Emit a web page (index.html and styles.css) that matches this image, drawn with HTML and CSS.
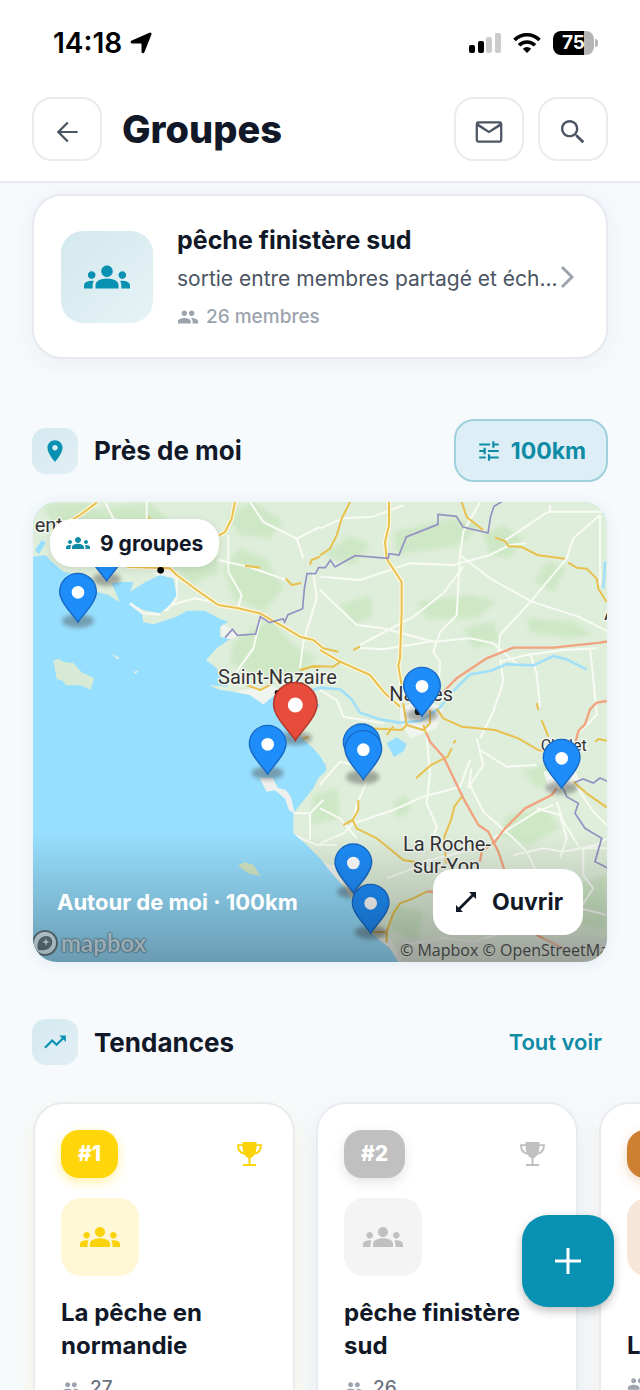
FILE: index.html
```
<!DOCTYPE html>
<html lang="fr">
  <head>
    <meta charset="UTF-8" />
    <meta name="viewport" content="width=device-width, initial-scale=1.0" />
    <title>Groupes</title>
    <link rel="stylesheet" href="styles.css" />
  </head>
  <body>
    <!-- Shared icons -->
    <svg class="sprite" aria-hidden="true">
      <symbol id="i-groups" viewBox="0 0 24 24">
        <path d="M12 12.75c1.63 0 3.07.39 4.24.9 1.08.48 1.76 1.56 1.76 2.73V18H6v-1.61c0-1.18.68-2.26 1.76-2.73 1.17-.52 2.61-.91 4.24-.91zM4 13c1.1 0 2-.9 2-2s-.9-2-2-2-2 .9-2 2 .9 2 2 2zm1.13 1.1c-.37-.06-.74-.1-1.13-.1-.99 0-1.93.21-2.78.58C.48 14.9 0 15.62 0 16.43V18h4.5v-1.61c0-.83.23-1.61.63-2.29zM20 13c1.1 0 2-.9 2-2s-.9-2-2-2-2 .9-2 2 .9 2 2 2zm4 3.43c0-.81-.48-1.53-1.22-1.85-.85-.37-1.79-.58-2.78-.58-.39 0-.76.04-1.13.1.4.68.63 1.46.63 2.29V18H24v-1.57zM12 6c1.66 0 3 1.34 3 3s-1.34 3-3 3-3-1.34-3-3 1.34-3 3-3z" />
      </symbol>
      <symbol id="i-people" viewBox="0 0 24 24">
        <path d="M16 11c1.66 0 2.99-1.34 2.99-3S17.66 5 16 5c-1.66 0-3 1.34-3 3s1.34 3 3 3zm-8 0c1.66 0 2.99-1.34 2.99-3S9.66 5 8 5C6.34 5 5 6.34 5 8s1.34 3 3 3zm0 2c-2.33 0-7 1.17-7 3.5V19h14v-2.5c0-2.33-4.67-3.5-7-3.5zm8 0c-.29 0-.62.02-.97.05 1.16.84 1.97 1.97 1.97 3.45V19h6v-2.5c0-2.33-4.67-3.5-7-3.5z" />
      </symbol>
      <symbol id="i-trophy" viewBox="0 0 24 24">
        <path d="M5.3 0h13.400v4c0 6-2 10-5.700 11.300V21h5.300v2H5.700v-2H11v-5.700C7.300 14 5.300 10 5.300 4z" />
        <path d="M6 3H1c0 4.800 2.200 7.500 6.500 8.200M18 3h5c0 4.800-2.200 7.500-6.500 8.200" fill="none" stroke="currentColor" stroke-width="1.900" />
      </symbol>
      <symbol id="pin" viewBox="-60 -150 120 180" overflow="visible">
        <path d="M0 0C-9 -18 -55 -58 -55 -92A55 55 0 0 1 55 -92C55 -58 9 -18 0 0Z" stroke-width="4" />
        <circle cy="-90" r="19" fill="#fff" stroke="none" />
      </symbol>
    </svg>

    <div class="app">
      <div class="status-bar">
        <div class="status-time">
          <span>14:18</span>
          <svg width="22" height="22" viewBox="0 0 22 22">
            <path d="M20 .6a1.300 1.300 0 0 1 1.500 1.700L14.500 20c-.8 1.900-3 1.500-3-.5V12.200c0-.5-.2-.7-.7-.7H2.500C.4 11.500 0 9.300 1.900 8.500z" />
          </svg>
        </div>
        <div class="status-icons">
          <svg width="32" height="22" viewBox="0 0 32 22">
            <rect y="13" width="6" height="8" rx="2" />
            <rect x="9" y="9" width="6" height="12" rx="2" />
            <rect x="17" y="5" width="6" height="16" rx="2" fill="#ccc" />
            <rect x="26" y="1" width="6" height="20" rx="2" fill="#ccc" />
          </svg>
          <svg width="28" height="22" viewBox="0 0 28 22" fill="none" stroke="#000" stroke-width="3.600">
            <path d="M1.500 8a17.500 17.500 0 0 1 25 0" fill="none" />
            <path d="M6 13.300a11.300 11.300 0 0 1 16 0" fill="none" />
            <path d="M14 21l-4.200-4.200a6 6 0 0 1 8.400 0z" fill="#000" stroke="none" />
          </svg>
          <div class="battery"><span>75</span></div>
        </div>
      </div>

      <header class="top-bar">
        <button class="icon-button" type="button" aria-label="Retour">
          <svg width="32" height="32" viewBox="0 0 24 24">
            <path d="M20 11.200H7.500l5.700-5.700L12 4.300l-7.700 7.700 7.700 7.700 1.200-1.200-5.700-5.700H20z" />
          </svg>
        </button>
        <h1>Groupes</h1>
        <button class="icon-button" type="button" aria-label="Messages">
          <svg width="32" height="32" viewBox="0 0 24 24">
            <path d="M20 4H4c-1.100 0-1.990.9-1.990 2L2 18c0 1.100.9 2 2 2h16c1.100 0 2-.9 2-2V6c0-1.100-.9-2-2-2zm.3 14.300H3.700V7.800L12 13l8.300-5.200zM12 11L4 5.700h16z" />
          </svg>
        </button>
        <button class="icon-button" type="button" aria-label="Rechercher">
          <svg width="32" height="32" viewBox="0 0 24 24">
            <path d="M15.500 14h-.79l-.28-.27C15.410 12.590 16 11.110 16 9.500 16 5.910 13.090 3 9.500 3S3 5.910 3 9.500 5.910 16 9.500 16c1.610 0 3.090-.59 4.230-1.570l.27.28v.79l5 4.990L20.490 19l-4.990-5zm-6 .2C6.900 14.200 4.800 12.100 4.800 9.500S6.900 4.800 9.500 4.800s4.700 2.100 4.700 4.700-2.100 4.700-4.700 4.700z" />
          </svg>
        </button>
      </header>

      <main class="content">
        <a class="group-card" href="#">
          <span class="group-icon">
            <svg width="46" height="46"><use href="#i-groups" /></svg>
          </span>
          <span class="group-text">
            <span class="group-name">pêche finistère sud</span>
            <span class="group-desc">sortie entre membres partagé et éch...</span>
            <span class="members">
              <svg width="22" height="22"><use href="#i-people" /></svg>
              26 membres
            </span>
          </span>
          <svg class="chevron" width="14" height="24" viewBox="0 0 14 24">
            <path d="M2 2l10 10L2 22" />
          </svg>
        </a>

        <section class="nearby">
          <div class="section-head">
            <span class="section-icon">
              <svg width="26" height="26" viewBox="0 0 24 24">
                <path d="M12 2C8.130 2 5 5.130 5 9c0 5.250 7 13 7 13s7-7.750 7-13c0-3.870-3.130-7-7-7zm0 9.500c-1.380 0-2.500-1.120-2.500-2.500s1.120-2.500 2.500-2.500 2.500 1.120 2.500 2.500-1.120 2.500-2.500 2.500z" />
              </svg>
            </span>
            <h2>Près de moi</h2>
            <button class="radius-button" type="button">
              <svg width="26" height="26" viewBox="0 0 24 24">
                <path d="M3 17v2h6v-2H3zM3 5v2h10V5H3zm10 16v-2h8v-2h-8v-2h-2v6h2zM7 9v2H3v2h4v2h2V9H7zm14 4v-2H11v2h10zm-6-4h2V7h4V5h-4V3h-2v6z" />
              </svg>
              100km
            </button>
          </div>

          <div class="map">
            <svg class="map-canvas" viewBox="39 21 1722 1380" preserveAspectRatio="xMidYMid slice">
              <defs>
                <filter id="soft" x="-20%" y="-20%" width="140%" height="140%">
                  <feGaussianBlur stdDeviation="7" />
                </filter>
                <clipPath id="land-clip">
                  <path d="M39 21V185L75 180 100 205 130 230 180 240 230 290 265 300 300 322 275 265 310 260 340 262 330 290 375 262 420 240 460 250 470 300 450 330 420 355 370 345 330 325 365 352 370 382 400 388 470 365 500 347 555 347 600 372 625 380 600 395 600 425 630 432 590 460 558 495 590 520 602 550 625 575 565 570 600 585 640 590 690 600 730 628 770 595 830 600 880 620 900 630 860 680 840 725 880 760 905 790 920 825 895 850 880 880 840 930 820 955 820 1015 860 1050 900 1090 920 1115 945 1145 975 1180 1020 1260 1060 1320 1110 1360 1135 1401H1761V21Z" />
                </clipPath>
              </defs>
              <rect x="39" y="21" width="1722" height="1380" fill="#97dfff" />

              <!-- Land -->
              <g clip-path="url(#land-clip)">
                <rect x="39" y="21" width="1722" height="1380" fill="#dfeeda" />
                <g fill="#c3e4ba" opacity=".6" filter="url(#soft)">
                  <path d="M70 30l120-9 90 50-60 40-120-10zM230 40l160-15 70 60-110 20zM620 60l80-40 90 60-40 50-90-10zM660 160l80 30 50 90-60 70-90-40-30-90zM470 120l110 30 20 80-90 40-60-60z" />
                  <path d="M640 440l110-70 70 80 70 40-60 50-150 10-50-50zM1120 110l180-40 80 20-60 60-190 30zM960 330l90-30 10 60-60 30zM1190 320l160-20 80 20-60 50-150 0zM1520 370l140 10 60 40-80 10-110-20z" />
                  <path d="M1390 120l60-30 60 40-40 60-60-10zM1540 260l40-60 60 20-40 70zM1330 400l90-20 20 60-80 20zM910 180l80-60 60 30-50 60zM1120 920l40-20 10 50-40 20z" />
                  <path d="M1460 960l120-20 40 60-100 50-80-30zM1650 1180l110-40v160l-80-10zM1330 1230l110 10 40 60-100 20zM1120 1230l90 20-20 90-80-40zM1510 830l80-30 30 50-70 30zM880 900l70-20 10 90-90 20z" />
                </g>
                <g fill="#f0f4ee">
                  <path d="M400 235l50-20 30 30-40 20zM1140 640l70-30 60 30-20 60-80 30-30-50zM1570 830l90-20 20 50-90 30zM600 380l60 40-50 20zM640 590l110-20 40 20-60 40z" />
                  <path d="M910 1105l50 10 10 50-60-20zM1050 1330l60 0 40 71h-60z" />
                </g>

                <!-- Minor roads -->
                <g fill="none" stroke="#f8fbf4" stroke-width="6" stroke-linejoin="round">
                  <path d="M255 21l25 50 40 20M380 21v60M690 21l40 60 100 50 70-35M830 130l20 60M595 195l90 20 115 40M625 120v110l40 70-10 35M470 250l0 60-30 35-90-10M455 330l70-20 70 15" />
                  <path d="M650 530l50-70 20-80M840 520l10-80 40-130-10-80M900 100l70-30 90-5 90-35M900 245l120 10 150-50 130 5 110-30 60-30 50-5" />
                  <path d="M1020 450l160-85 90-70 60-80M900 285l110 105 80 10 150 40 110-10 70 15 80 70M1010 458l80 5 150-25M1380 21l-50 90-10 70-10 180-50 50-20 60 20 30-5 100" />
                  <path d="M1320 180l90 70 125 70 140 45 90 45M1450 140l135-90h160l15-10M1740 60l-80 70-20 60-100 120-100 110-5 60M1740 60v210M1590 30v20M1440 500l80-20 110-15 100-5" />
                  <path d="M1440 490l10 70-30 90-40 80M1530 475l20 60 10 100M1710 460l10 90 10 110-50 50M900 585l50 30 20 50 120 20M1220 725l10 110-10 90 30 70-20 60M900 870l60-70 80 20" />
                  <path d="M1000 985l120-40 90-40 110-30 30-80M1370 730l20 80-40 60 40 80 90 80 40 40 60 120M1380 765l80 50 90-5M1345 880l10-60M900 940l60 30 50 60M900 1045l70-30 30-30" />
                  <path d="M1550 940l70 20 20 70-20 60M1610 920l20 60 50 80 90 0M1420 1030l130-80 50-20M1210 1100l80-20 110-30M1660 860l60 90 40 40M1480 1080l90-20 60 10 100-20 30-20M1500 1170l60-10M1690 1060v80l30 40-40 60 80 20" />
                  <path d="M820 955h50l40-40M870 955l0 80M820 1020l70 30 60 0M1040 860l-30 70-10 50M1100 1150l80-30 100-5M1150 1350l120-20 90 10 100-30" />
                </g>

                <!-- Rivers -->
                <g fill="none" stroke="#a2e0fa" stroke-width="8" stroke-linejoin="round">
                  <path d="M830 600l70-22 60 5 35 30 25 40 60 20 60 10 60-5 60-40 40-50 50-50 60-10 50-20 80 3 60-28 40 10 60 30" />
                  <path d="M1755 200l-5 80" />
                </g>
                <path d="M1100 745l30-18 30 20-8 20-30 20zM900 790l18 20-4 22-14 8zM45 165l20-30 12 8-20 35zM90 180l15-10" fill="#97dfff" />

                <!-- Main roads -->
                <g fill="none" stroke-linejoin="round">
                  <g stroke="#fff7dc" stroke-width="13">
                    <path d="M130 90l50-30 50-37M645 21l-10 50-20 40-18 10M320 215l130 5 20 20 60 45 65 45 60 10 65 15 70 40 50 30 40 10 30 25M900 465l60 35 90 40 45 55 45 40" />
                    <path d="M1107 21l0 70-12 50 5 50 45 70 0 90-5 140-5 20 10 60" />
                  </g>
                  <g stroke="#e8c04e" stroke-width="6">
                    <path d="M130 90l50-30 50-37M645 21l-10 50-20 40-18 10M320 215l130 5 20 20 60 45 65 45 60 10 65 15 70 40 50 30 40 10 30 25 45 10" />
                    <path d="M840 525l40-12 60 2 25-17M900 465l60 35 90 40 45 55 45 40" />
                    <path d="M1107 21l0 70-12 50 5 50 45 70 0 90-5 140-5 20 10 60M990 21l-25 50-15 50-20 40-30 20M870 210l5-15 25-10M388 65v20M675 212l45 6M797 250l18 20 28-6" />
                    <path d="M1325 21l15 45 50 40M1425 128l30 10 10 15 40 3 50 25 80 10M1645 203l25 15 30 3 30 30 5 30 25 40" />
                    <path d="M1000 465l20-10M680 570l40 15 40-20M845 525l30-10 25 2M1150 625l10 65-15 15-100-5M1160 690l50 15 20-20 0-40M1250 640l20 30 55 25 100 10 70 25 60 35 30 5M1210 690l10 30M1100 720l20-25" />
                    <path d="M1550 625l5 20M1565 675l20 50M1188 850l45-40 50-25 12-25M1300 745l8-10M1015 915l0 30-17 30-28 15M998 975l12 25 60 30 80 65 50 8M1325 905l-22 30-10 40-20 50 5 80M1660 860l40 35 60 42" />
                    <path d="M1220 1190l-40 20-40 15-20 30-20 55M1060 1310l40 2 0 30M1725 740l10-8 25 5M865 725l-25 10" />
                  </g>
                </g>
                <g fill="none" stroke="#f0a37e" stroke-width="7" stroke-linejoin="round">
                  <path d="M1260 600l50-50 90-60 80-32 120 0 140-15 60-10 60-30M1220 715l10 25 40 45 60 125 45 80 30 20 30 60 20 60" />
                  <path d="M1760 618l-30 5-20 20-15 45-20 20-10 40M1610 880l-15 20-80 40-60 60-30 40-40 30-5 30M1250 1190l-30 0M1550 1320l80 40" />
                </g>
                <path d="M615 428l22-25 15 18 55-4 14-52 28 18 40-12 5 10 10-22 44-18 5-60 8-45 25 0 10-18 20 0 15-22 14 20 60-34 100 8 2-14 30 4 22-54 95-38 0-30 55 6 20 32 75 18 8-50 10-30 30-18" fill="none" stroke="#9391c2" stroke-width="5" />
                <path d="M1630 880l10 25 35 20-10 30 30 45 50 30-20 70 40 20M1665 862l25-10 30 12 20-15 22 10" fill="none" stroke="#9391c2" stroke-width="5" />
              </g>

              <!-- Islands -->
              <path d="M100 497l15-6 15 10 30 3 25 28 38 18-12 35-28-14-45 0-10-14-18-5z" fill="#d7ead5" />
              <path d="M275 478l25 10-8 5zM340 530l15-3-8 10z" fill="#e3f0e6" />
              <path d="M655 1110l20-8 25 8 22 32-30-4-25-15z" fill="#d3e8c4" />
              <path d="M718 848l40 0 15 30 25 8 15 20 12 50-18-10-12-35-30-25-25 4z" fill="#edf0ec" />
              <path d="M330 325l40 30 50 3" fill="none" stroke="#f4f7f2" stroke-width="8" />

              <!-- Towns -->
              <g class="map-label">
                <text x="44" y="112">ent</text>
                <text x="594" y="566">Saint-Nazaire</text>
                <text x="1108" y="617">Nantes</text>
                <text x="1562" y="767" class="small">Cholet</text>
                <text x="1149" y="1067">La Roche-</text>
                <text x="1178" y="1133">sur-Yon</text>
                <text x="1752" y="374">A</text>
              </g>
              <circle cx="422" cy="226" r="10" />
              <circle cx="773" cy="594" r="9" />
              <circle cx="1194" cy="650" r="10" />

              <!-- Pins -->
              <g fill="#444" opacity=".42" filter="url(#soft)">
                <ellipse cx="260" cy="253" rx="42" ry="20" />
                <ellipse cx="174" cy="378" rx="48" ry="20" />
                <ellipse cx="1206" cy="660" rx="48" ry="20" />
                <ellipse cx="826" cy="730" rx="50" ry="20" />
                <ellipse cx="743" cy="834" rx="48" ry="20" />
                <ellipse cx="1028" cy="846" rx="50" ry="22" />
                <ellipse cx="1625" cy="878" rx="48" ry="20" />
                <ellipse cx="1000" cy="1190" rx="48" ry="20" />
                <ellipse cx="1052" cy="1312" rx="48" ry="20" />
              </g>
              <g class="pins">
                <use href="#pin" x="200" y="108" width="120" height="180" />
                <use href="#pin" x="114" y="232" width="120" height="180" />
                <use href="#pin" x="1146" y="514" width="120" height="180" />
                <use class="me" href="#pin" x="755" y="559" width="142" height="213" />
                <use href="#pin" x="683" y="688" width="120" height="180" />
                <use href="#pin" x="965" y="684" width="120" height="180" />
                <use href="#pin" x="970" y="704" width="120" height="180" />
                <use href="#pin" x="1565" y="730" width="120" height="180" />
                <use href="#pin" x="940" y="1044" width="120" height="180" />
                <use href="#pin" x="992" y="1165" width="120" height="180" />
              </g>
            </svg>

            <div class="map-logo">
              <svg width="26" height="26" viewBox="0 0 26 26">
                <circle cx="13" cy="13" r="12" fill="#fff" stroke="#555" stroke-width="2" />
                <path d="M6 20c-2-8 2-14 9-14a6 6 0 0 1 5 8c-2 6-8 7-14 6z" fill="#555" />
                <path d="M14 8l1 3 3 1-3 1-1 3-1-3-3-1 3-1z" fill="#fff" />
              </svg>
              <span>mapbox</span>
            </div>
            <div class="map-credits"><a href="#">© Mapbox</a> <a href="#">© OpenStreetMap</a></div>
            <div class="map-shade"></div>

            <div class="map-count">
              <svg width="24" height="24"><use href="#i-groups" /></svg>
              <span>9 groupes</span>
            </div>
            <div class="map-footer">
              <span>Autour de moi · 100km</span>
              <button class="open-button" type="button">
                <svg width="22" height="22" viewBox="0 0 22 22">
                  <path d="M14 1h7v7l-2.500-2.500-13 13L8 21H1v-7l2.500 2.500 13-13z" />
                </svg>
                Ouvrir
              </button>
            </div>
          </div>
        </section>

        <section class="trends">
          <div class="section-head">
            <span class="section-icon">
              <svg width="26" height="26" viewBox="0 0 24 24">
                <path d="M16 6l2.290 2.290-4.880 4.880-4-4L2 16.590 3.410 18l6-6 4 4 6.300-6.290L22 12V6z" />
              </svg>
            </span>
            <h2>Tendances</h2>
            <a class="see-all" href="#">Tout voir</a>
          </div>

          <div class="trend-list">
            <article class="trend-card gold">
              <div class="trend-top">
                <span class="rank">#1</span>
                <svg width="25" height="25"><use href="#i-trophy" /></svg>
              </div>
              <div class="trend-icon">
                <svg width="40" height="40"><use href="#i-groups" /></svg>
              </div>
              <h3>La pêche en normandie</h3>
              <p class="count"><svg width="20" height="20"><use href="#i-people" /></svg>27</p>
            </article>
            <article class="trend-card silver">
              <div class="trend-top">
                <span class="rank">#2</span>
                <svg width="25" height="25"><use href="#i-trophy" /></svg>
              </div>
              <div class="trend-icon">
                <svg width="40" height="40"><use href="#i-groups" /></svg>
              </div>
              <h3>pêche finistère sud</h3>
              <p class="count"><svg width="20" height="20"><use href="#i-people" /></svg>26</p>
            </article>
            <article class="trend-card bronze">
              <div class="trend-top">
                <span class="rank">#3</span>
                <svg width="25" height="25"><use href="#i-trophy" /></svg>
              </div>
              <div class="trend-icon">
                <svg width="40" height="40"><use href="#i-groups" /></svg>
              </div>
              <h3>L</h3>
              <p class="count"><svg width="20" height="20"><use href="#i-people" /></svg></p>
            </article>
          </div>
        </section>
      </main>

      <button class="fab" type="button" aria-label="Créer un groupe">
        <svg width="28" height="28" viewBox="0 0 28 28">
          <path d="M14 1v26M1 14h26" />
        </svg>
      </button>
    </div>
  </body>
</html>
```
FILE: styles.css
```
* {
  box-sizing: border-box;
}

body {
  margin: 0;
  font-family: Inter, "Liberation Sans", sans-serif;
  color: #111827;
  background: #f6fafd;
}

h1,
h2,
h3,
p {
  margin: 0;
}

a {
  color: inherit;
  text-decoration: none;
}

button {
  font-family: inherit;
  padding: 0;
  cursor: pointer;
}

svg {
  flex: none;
  fill: currentColor;
}

.sprite {
  position: absolute;
  width: 0;
  height: 0;
}

.app {
  display: flex;
  flex-direction: column;
  height: 100vh;
  overflow: hidden;
}

/* Status bar */
.status-bar {
  flex: none;
  display: flex;
  justify-content: space-between;
  align-items: center;
  height: 86px;
  padding: 0 46px 0 53px;
  color: #000;
  background: #fff;
}

.status-time,
.status-icons {
  display: flex;
  align-items: center;
}

.status-time {
  gap: 8px;
  font-size: 28px;
  font-weight: 600;
}

.status-icons {
  gap: 12px;
}

.battery {
  position: relative;
  width: 41px;
  height: 24px;
  border-radius: 8px;
  color: #fff;
  background: linear-gradient(to right, #000 75%, #b5b5b5 75%);
  font-size: 19px;
  font-weight: 700;
  line-height: 24px;
  text-align: center;
}

.battery::after {
  content: "";
  position: absolute;
  top: 8px;
  right: -4px;
  width: 3px;
  height: 8px;
  border-radius: 0 3px 3px 0;
  background: #b5b5b5;
}

/* Header */
.top-bar {
  flex: none;
  display: flex;
  align-items: center;
  gap: 14px;
  height: 97px;
  padding: 0 32px 10px;
  background: #fff;
  border-bottom: 2px solid #e8ebf0;
}

.top-bar h1 {
  flex: 1;
  padding-left: 6px;
  font-size: 38px;
  font-weight: 800;
}

.icon-button {
  display: flex;
  align-items: center;
  justify-content: center;
  width: 70px;
  height: 64px;
  padding-top: 6px;
  color: #4b5563;
  background: #fff;
  border: 2px solid #e8ecef;
  border-radius: 20px;
}

.content {
  flex: 1;
  padding-top: 11px;
  overflow-y: auto;
  scrollbar-width: none;
}

/* Group card */
.group-card {
  display: flex;
  align-items: center;
  height: 165px;
  margin: 0 32px;
  padding: 0 32px 0 27px;
  background: #fff;
  border: 2px solid #e7e9ef;
  border-radius: 30px;
  box-shadow: 0 4px 24px rgba(30, 50, 90, 0.06);
}

.group-icon {
  flex: none;
  display: flex;
  align-items: center;
  justify-content: center;
  width: 92px;
  height: 92px;
  margin-right: 24px;
  color: #0891b2;
  background: linear-gradient(135deg, #d3e8ef, #e6f3f5);
  border-radius: 22px;
}

.group-text {
  flex: 1;
  display: flex;
  flex-direction: column;
  gap: 10px;
  min-width: 0;
  padding-top: 3px;
  white-space: nowrap;
}

.group-name {
  font-size: 25px;
  font-weight: 700;
  line-height: 30px;
}

.group-desc {
  color: #4b5563;
  font-size: 21px;
  line-height: 28px;
}

.members {
  display: flex;
  align-items: center;
  gap: 7px;
  color: #9ca3af;
  font-size: 19px;
  font-weight: 500;
  line-height: 28px;
}

.chevron {
  fill: none;
  stroke: #9ca3af;
  stroke-width: 3;
}

/* Sections */
.nearby {
  padding: 60px 32px 0;
}

.section-head {
  display: flex;
  align-items: center;
}

.section-icon {
  display: flex;
  align-items: center;
  justify-content: center;
  width: 46px;
  height: 46px;
  margin-right: 16px;
  color: #0891b2;
  background: linear-gradient(135deg, #d5e9f0, #e1eff4);
  border-radius: 14px;
}

.section-head h2 {
  flex: 1;
  font-size: 26px;
  font-weight: 700;
}

.radius-button {
  display: flex;
  align-items: center;
  gap: 9px;
  height: 63px;
  padding: 0 20px;
  color: #0e8ba5;
  background: #deeef6;
  border: 2px solid #9fd0dc;
  border-radius: 20px;
  font-size: 23px;
  font-weight: 700;
}

.see-all {
  padding-right: 6px;
  color: #0e8ba5;
  font-size: 22px;
  font-weight: 600;
}

/* Map */
.map {
  position: relative;
  height: 460px;
  margin: 20px 1px 0;
  border-radius: 24px;
  box-shadow: 0 2px 16px rgba(30, 50, 90, 0.08);
  overflow: hidden;
}

.map-canvas {
  display: block;
  width: 100%;
  height: 100%;
  fill: #000;
}

.map-label {
  fill: #333;
  stroke: #f4f8f2;
  stroke-width: 8px;
  paint-order: stroke;
  font-family: Roboto, "Liberation Sans", sans-serif;
  font-size: 60px;
}

.map-label .small {
  font-size: 48px;
}

.pins {
  fill: #1e8dfa;
  stroke: #1769c4;
}

.pins .me {
  fill: #e74c3c;
  stroke: #b53a2d;
}

.map-shade {
  position: absolute;
  inset: auto 0 0;
  height: 130px;
  background: linear-gradient(to top, rgba(0, 0, 0, 0.3), transparent);
}

.map-logo {
  position: absolute;
  left: -1px;
  bottom: 6px;
  display: flex;
  align-items: center;
  gap: 3px;
  color: #e8eef2;
  font-family: Lato, "Liberation Sans", sans-serif;
  font-size: 24px;
  font-weight: 700;
  line-height: 26px;
  text-shadow: 0 0 2px #333, 0 0 2px #333;
  opacity: 0.7;
}

.map-credits {
  position: absolute;
  right: 0;
  bottom: 0;
  width: 210px;
  padding-left: 3px;
  overflow: hidden;
  color: #555;
  background: rgba(225, 225, 225, 0.4);
  font-family: "Open Sans", "Liberation Sans", sans-serif;
  font-size: 16px;
  line-height: 24px;
  white-space: nowrap;
}

.map-count {
  position: absolute;
  top: 17px;
  left: 17px;
  display: flex;
  align-items: center;
  gap: 10px;
  height: 48px;
  padding: 0 16px;
  background: #fff;
  border-radius: 22px;
  box-shadow: 0 2px 8px rgba(0, 0, 0, 0.1);
  font-size: 21px;
  font-weight: 700;
}

.map-count svg {
  color: #0e8ba5;
}

.map-footer {
  position: absolute;
  inset: auto 24px 27px;
  display: flex;
  align-items: center;
  justify-content: space-between;
  color: #fff;
  font-size: 22px;
  font-weight: 700;
}

.open-button {
  display: flex;
  align-items: center;
  gap: 15px;
  height: 66px;
  padding: 0 20px 0 22px;
  color: #111827;
  background: #fff;
  border: 0;
  border-radius: 20px;
  font-size: 23px;
  font-weight: 700;
}

/* Trends */
.trends {
  padding-top: 57px;
}

.trends .section-head {
  padding: 0 32px;
}

.trend-list {
  display: flex;
  gap: 21px;
  padding: 37px 33px 30px;
  overflow-x: auto;
  scrollbar-width: none;
}

.trend-card {
  flex: none;
  width: 262px;
  padding: 26px;
  background: #fff;
  border: 2px solid #e9ebf0;
  border-radius: 30px;
}

.trend-top {
  display: flex;
  align-items: center;
  justify-content: space-between;
  padding-right: 5px;
}

.rank {
  padding: 0 17px;
  color: #fff;
  border-radius: 18px;
  font-size: 21px;
  font-weight: 800;
  line-height: 48px;
}

.trend-icon {
  display: flex;
  align-items: center;
  justify-content: center;
  width: 78px;
  height: 78px;
  margin: 20px 0;
  border-radius: 20px;
}

.trend-card h3 {
  display: flex;
  align-items: flex-end;
  min-height: 66px;
  color: #111827;
  font-size: 24px;
  font-weight: 700;
  line-height: 33px;
}

.count {
  display: flex;
  align-items: center;
  gap: 9px;
  margin-top: 12px;
  color: #6b7280;
  font-size: 19px;
  font-weight: 500;
  line-height: 28px;
}

.count svg {
  color: #9ca3af;
}

.gold {
  color: #fbd30b;
  box-shadow: 0 8px 24px rgba(255, 215, 0, 0.12);
}

.gold .rank {
  background: #ffd60a;
  box-shadow: 0 4px 12px rgba(255, 215, 0, 0.35);
}

.gold .trend-icon {
  background: #fff7d6;
}

.silver {
  color: #c0c0c0;
  box-shadow: 0 8px 24px rgba(120, 120, 120, 0.1);
}

.silver .rank {
  background: #c0c0c0;
  box-shadow: 0 4px 12px rgba(120, 120, 120, 0.2);
}

.silver .trend-icon {
  background: #f4f4f4;
}

.bronze {
  color: #cd7f32;
  box-shadow: 0 8px 24px rgba(205, 127, 50, 0.1);
}

.bronze .rank {
  background: #cd7f32;
  box-shadow: 0 4px 12px rgba(205, 127, 50, 0.3);
}

.bronze .trend-icon {
  background: #f5e6d9;
}

/* Floating button */
.fab {
  position: fixed;
  right: 26px;
  bottom: 83px;
  display: flex;
  align-items: center;
  justify-content: center;
  width: 92px;
  height: 92px;
  background: #0891b2;
  border: 0;
  border-radius: 26px;
  box-shadow: 0 4px 10px rgba(0, 0, 0, 0.25);
}

.fab svg {
  stroke: #fff;
  stroke-width: 3;
}
```
